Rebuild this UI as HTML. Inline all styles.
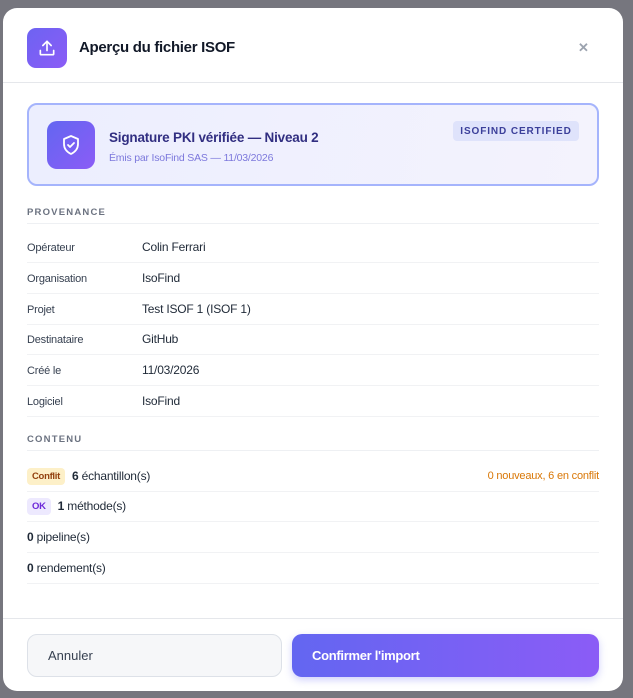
<!DOCTYPE html>
<html><head><meta charset="utf-8"><style>
*{box-sizing:border-box;margin:0;padding:0}
body{width:633px;height:698px;background:#76767e;font-family:"Liberation Sans",sans-serif;position:relative;overflow:hidden;color:#1f2937}
.m{position:absolute;left:3px;top:8px;width:620px;height:683px;background:#fff;border-radius:14px;overflow:hidden}
.a{position:absolute}
.hd{left:0;top:0;width:620px;height:75px;border-bottom:1px solid #e5e7eb}
.ic{left:24px;top:20px;width:40px;height:40px;border-radius:9px;background:linear-gradient(135deg,#6d63f2,#8b5cf6);display:flex;align-items:center;justify-content:center}
.t{left:76px;top:31px;font-size:15px;font-weight:bold;color:#111827;letter-spacing:-0.3px}
.x{left:575px;top:32px;font-size:13px;color:#9ca3af;font-weight:bold}
.card{left:24px;top:95px;width:572px;height:83px;border:2px solid #a5b4fc;border-radius:10px;background:linear-gradient(100deg,#eceefe,#f4f3fd)}
.ci{left:18px;top:16px;width:48px;height:48px;border-radius:10px;background:linear-gradient(135deg,#6366f1,#8b5cf6);display:flex;align-items:center;justify-content:center}
.ct{left:80px;top:25px;font-size:13.5px;font-weight:bold;color:#312e81;letter-spacing:-0.2px}
.cs{left:80px;top:47px;font-size:10.5px;color:#7c78dc;letter-spacing:-0.2px}
.bd{left:424px;top:16px;width:126px;height:20px;background:#dfe3fb;border-radius:4px;font-size:10px;font-weight:bold;color:#3b3f9a;letter-spacing:0.9px;text-align:center;line-height:21px}
.sh{left:24px;font-size:9.5px;font-weight:bold;letter-spacing:1.2px;color:#6b7280;width:572px;border-bottom:1px solid #eef0f3;height:17px}
.r{left:24px;width:572px;height:31px;border-bottom:1px solid #f1f2f4;font-size:12px;line-height:31px;letter-spacing:-0.2px}
.l{position:absolute;left:0;font-size:11px;color:#374151;top:1px}
.v{position:absolute;left:115px;color:#1f2937}
.tag{display:inline-block;font-size:9.5px;font-weight:bold;padding:0 5px;height:17px;line-height:17px;border-radius:4px;margin-right:7px;vertical-align:1px;letter-spacing:-0.3px}
.ft{left:0;top:610px;width:620px;border-top:1px solid #e5e7eb}
.b1{left:24px;top:626px;width:255px;height:43px;border:1px solid #dde1e8;border-radius:10px;background:#f6f7f9;font-size:13px;color:#374151;line-height:41px;padding-left:20px}
.b2{left:289px;top:626px;width:307px;height:43px;border-radius:10px;background:linear-gradient(90deg,#6366f1,#8b5cf6);font-size:13px;font-weight:bold;color:#fff;line-height:43px;padding-left:20px;letter-spacing:-0.3px;box-shadow:0 3px 8px rgba(99,102,241,.3)}
</style></head><body>
<div class="m">
<div class="a hd"></div>
<div class="a ic"><svg width="20" height="20" viewBox="0 0 24 24" fill="none" stroke="#fff" stroke-width="2" stroke-linecap="round" stroke-linejoin="round"><path d="M4 15v4a1 1 0 0 0 1 1h14a1 1 0 0 0 1-1v-4"/><path d="M12 15V4"/><path d="M7 9l5-5 5 5"/></svg></div>
<div class="a t">Aperçu du fichier ISOF</div>
<div class="a x">✕</div>
<div class="a card">
<div class="a ci"><svg width="24" height="24" viewBox="0 0 24 24" fill="none" stroke="#fff" stroke-width="1.8" stroke-linecap="round" stroke-linejoin="round"><path d="M12 3l7 3v5c0 5-3 8-7 10-4-2-7-5-7-10V6z"/><path d="M9 12l2 2 4-4"/></svg></div>
<div class="a ct">Signature PKI vérifiée — Niveau 2</div>
<div class="a cs">Émis par IsoFind SAS — 11/03/2026</div>
<div class="a bd">ISOFIND CERTIFIED</div>
</div>
<div class="a sh" style="top:199px">PROVENANCE</div>
<div class="a r" style="top:224px"><span class="l">Opérateur</span><span class="v">Colin Ferrari</span></div>
<div class="a r" style="top:255px"><span class="l">Organisation</span><span class="v">IsoFind</span></div>
<div class="a r" style="top:286px"><span class="l">Projet</span><span class="v">Test ISOF 1 (ISOF 1)</span></div>
<div class="a r" style="top:316px"><span class="l">Destinataire</span><span class="v">GitHub</span></div>
<div class="a r" style="top:347px"><span class="l">Créé le</span><span class="v">11/03/2026</span></div>
<div class="a r" style="top:378px"><span class="l">Logiciel</span><span class="v">IsoFind</span></div>
<div class="a sh" style="top:426px">CONTENU</div>
<div class="a r" style="top:453px"><span class="tag" style="background:#fdf0c8;color:#92400e">Conflit</span><b>6</b> échantillon(s)<span style="position:absolute;right:0;font-size:11px;color:#d97706">0 nouveaux, 6 en conflit</span></div>
<div class="a r" style="top:483px"><span class="tag" style="background:#ede9fe;color:#6d28d9">OK</span><b>1</b> méthode(s)</div>
<div class="a r" style="top:514px"><b>0</b> pipeline(s)</div>
<div class="a r" style="top:545px"><b>0</b> rendement(s)</div>
<div class="a ft"></div>
<div class="a b1">Annuler</div>
<div class="a b2">Confirmer l'import</div>
</div>
</body></html>
